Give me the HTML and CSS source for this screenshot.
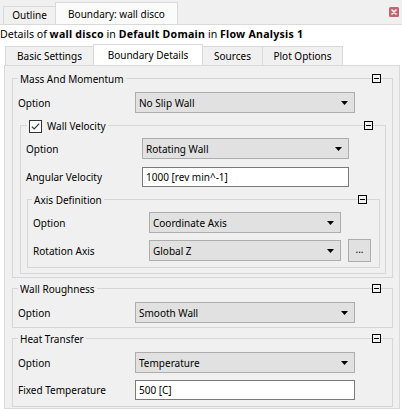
FILE: index.html
```html
<!DOCTYPE html>
<html>
<head>
<meta charset="utf-8">
<title>Boundary: wall disco</title>
<link rel="stylesheet" href="styles.css">
</head>
<body>
<div class="topbar">
  <div class="ttab">Outline</div>
  <div class="ttab active">Boundary: wall disco</div>
  <div class="close"><svg width="10" height="10" viewBox="0 0 10 10"><rect x="0" y="0" width="10" height="10" rx="1.5" fill="#c4646f"/><path d="M3 3 L7 7 M7 3 L3 7" stroke="#fff" stroke-width="1.6" stroke-linecap="round"/></svg></div>
</div>
<div class="details">Details of <b>wall disco</b> in <b>Default Domain</b> in <b>Flow Analysis 1</b></div>
<div class="tabs">
  <div class="tab t1">Basic Settings</div>
  <div class="tab t2 active">Boundary Details</div>
  <div class="tab t3">Sources</div>
  <div class="tab t4">Plot Options</div>
</div>
<div class="panel">
  <div class="group g-mm">
    <div class="head"><span class="title">Mass And Momentum</span><span class="collapse"><svg width="9" height="9" viewBox="0 0 9 9"><rect x="0.5" y="0.5" width="8" height="8" fill="#f0f0f0" stroke="#000"/><path d="M2 4.5 H7" stroke="#000"/></svg></span></div>
    <div class="row"><span class="label">Option</span><div class="combo w-mm"><span>No Slip Wall</span><svg class="arrow" width="7" height="4" viewBox="0 0 7 4"><path d="M0 0 H7 L3.5 4 Z" fill="#000"/></svg></div></div>
    <div class="group g-wv">
      <div class="head h-wv"><span class="title"><span class="check"><svg width="13" height="13" viewBox="0 0 13 13"><rect x="0.5" y="0.5" width="12" height="12" fill="#fff" stroke="#333"/><path d="M2.8 6.6 L5.2 9 L10.2 3.6" fill="none" stroke="#333" stroke-width="1.2"/></svg></span>Wall Velocity</span><span class="collapse"><svg width="9" height="9" viewBox="0 0 9 9"><rect x="0.5" y="0.5" width="8" height="8" fill="#f0f0f0" stroke="#000"/><path d="M2 4.5 H7" stroke="#000"/></svg></span></div>
      <div class="row r-first"><span class="label l-n">Option</span><div class="combo w-wv"><span>Rotating Wall</span><svg class="arrow" width="7" height="4" viewBox="0 0 7 4"><path d="M0 0 H7 L3.5 4 Z" fill="#000"/></svg></div></div>
      <div class="row r-av"><span class="label l-n">Angular Velocity</span><div class="input w-wv">1000 [rev min^-1]</div></div>
      <div class="group g-ad">
        <div class="head h-ad"><span class="title">Axis Definition</span><span class="collapse"><svg width="9" height="9" viewBox="0 0 9 9"><rect x="0.5" y="0.5" width="8" height="8" fill="#f0f0f0" stroke="#000"/><path d="M2 4.5 H7" stroke="#000"/></svg></span></div>
        <div class="row r-first"><span class="label l-n">Option</span><div class="combo w-ad"><span>Coordinate Axis</span><svg class="arrow" width="7" height="4" viewBox="0 0 7 4"><path d="M0 0 H7 L3.5 4 Z" fill="#000"/></svg></div></div>
        <div class="row r-rot"><span class="label l-n">Rotation Axis</span><div class="combo w-ad"><span>Global Z</span><svg class="arrow" width="7" height="4" viewBox="0 0 7 4"><path d="M0 0 H7 L3.5 4 Z" fill="#000"/></svg></div><div class="btn">...</div></div>
      </div>
    </div>
  </div>
  <div class="group g-wr">
    <div class="head"><span class="title">Wall Roughness</span><span class="collapse"><svg width="9" height="9" viewBox="0 0 9 9"><rect x="0.5" y="0.5" width="8" height="8" fill="#f0f0f0" stroke="#000"/><path d="M2 4.5 H7" stroke="#000"/></svg></span></div>
    <div class="row"><span class="label">Option</span><div class="combo w-mm"><span>Smooth Wall</span><svg class="arrow" width="7" height="4" viewBox="0 0 7 4"><path d="M0 0 H7 L3.5 4 Z" fill="#000"/></svg></div></div>
  </div>
  <div class="group g-ht">
    <div class="head"><span class="title">Heat Transfer</span><span class="collapse"><svg width="9" height="9" viewBox="0 0 9 9"><rect x="0.5" y="0.5" width="8" height="8" fill="#f0f0f0" stroke="#000"/><path d="M2 4.5 H7" stroke="#000"/></svg></span></div>
    <div class="row"><span class="label">Option</span><div class="combo w-mm"><span>Temperature</span><svg class="arrow" width="7" height="4" viewBox="0 0 7 4"><path d="M0 0 H7 L3.5 4 Z" fill="#000"/></svg></div></div>
    <div class="row r-ft"><span class="label">Fixed Temperature</span><div class="input w-mm">500 [C]</div></div>
  </div>
</div>
</body>
</html>
```
FILE: styles.css
```css
html, body {
  margin: 0;
  padding: 0;
}
body {
  width: 402px;
  height: 409px;
  overflow: hidden;
  background: #ffffff;
  font-family: "Noto Sans", "Open Sans", sans-serif;
  font-size: 10px;
  color: #000;
}

/* top document tabs */
.topbar {
  display: flex;
  align-items: flex-end;
  height: 24px;
  background: #f0f0f0;
  border-bottom: 1px solid #d9d9d9;
  padding-left: 3px;
}
.ttab {
  box-sizing: border-box;
  width: 53px;
  height: 18px;
  border: 1px solid #d9d9d9;
  border-bottom: none;
  background: #f0f0f0;
  text-align: center;
  line-height: 17px;
  white-space: nowrap;
}
.ttab.active {
  width: 123px;
  height: 22px;
  background: #fbfbfb;
  line-height: 18px;
  padding-top: 2px;
  margin-left: -1px;
}
.close {
  margin-left: auto;
  margin-right: 3px;
  align-self: center;
  height: 10px;
  display: flex;
}

/* details line */
.details {
  height: 16px;
  line-height: 16px;
  padding-top: 1px;
  font-size: 10.6px;
  white-space: nowrap;
}
.details b {
  font-weight: 700;
  letter-spacing: 0.25px;
}

/* inner tabs */
.tabs {
  display: flex;
  align-items: flex-end;
  height: 23px;
  padding-left: 5px;
}
.tab {
  box-sizing: border-box;
  height: 19px;
  border: 1px solid #d9d9d9;
  border-bottom: none;
  background: #f0f0f0;
  text-align: center;
  line-height: 17px;
  padding-top: 1px;
  white-space: nowrap;
}
.tab + .tab {
  margin-left: -1px;
}
.t1 { width: 89px; }
.t2 { width: 110px; }
.t3 { width: 61px; }
.t4 { width: 81px; }
.tab.active {
  height: 21px;
  background: #ffffff;
  line-height: 16px;
  padding-top: 2px;
  position: relative;
  z-index: 1;
}

/* panel */
.panel {
  margin: 0 2px 0 4px;
  border: 1px solid #d9d9d9;
  background: #f0f0f0;
  padding: 0 6px 1px 7px;
}

.group {
  border: 1px solid #d6d6d6;
}
.g-mm { margin-top: 12px; padding-bottom: 3px; }
.g-wv { margin: 12px 6px 0 7px; padding-bottom: 5px; }
.g-ad { margin: 12px 5px 0 6px; padding-bottom: 5px; }
.g-wr { margin-top: 10px; padding-bottom: 4px; }
.g-ht { margin-top: 10px; padding-bottom: 6px; }

.head {
  display: flex;
  align-items: center;
  justify-content: space-between;
  height: 15px;
  margin-top: -7px;
  padding: 0 11px 0 5px;
}
.h-wv { padding: 0 12px 0 6px; }
.h-ad { padding: 0 12px 0 4px; }
.title {
  display: flex;
  align-items: center;
  background: #f0f0f0;
  padding: 0 2px;
  line-height: 15px;
  white-space: nowrap;
}
.check {
  display: flex;
  width: 13px;
  height: 13px;
  margin-right: 5px;
}
.collapse {
  display: flex;
  width: 9px;
  height: 9px;
  background: #f0f0f0;
  margin-bottom: 2px;
}

.row {
  display: flex;
  align-items: center;
  margin-top: 5px;
}
.r-first { margin-top: 4px; }
.r-av { margin-top: 8px; }
.r-rot { margin-top: 6px; }
.r-ft { margin-top: 7px; }

.label {
  box-sizing: border-box;
  flex: none;
  width: 122px;
  padding-left: 5px;
  white-space: nowrap;
}
.l-n { width: 121px; }

.combo {
  box-sizing: border-box;
  flex: none;
  height: 21px;
  display: flex;
  align-items: center;
  justify-content: space-between;
  background: #e1e1e1;
  border: 1px solid #adadad;
  padding: 0 6px 0 3px;
  white-space: nowrap;
}
.arrow {
  display: block;
  flex: none;
}
.input {
  box-sizing: border-box;
  flex: none;
  height: 20px;
  line-height: 18px;
  background: #ffffff;
  border: 1px solid #7a7a7a;
  padding: 0 3px;
  white-space: nowrap;
}
.w-mm { width: 220px; }
.w-wv { width: 207px; }
.w-ad { width: 192px; }

.btn {
  box-sizing: border-box;
  flex: none;
  width: 23px;
  height: 23px;
  margin-left: 7px;
  background: #e1e1e1;
  border: 1px solid #adadad;
  text-align: center;
  line-height: 19px;
}
```
